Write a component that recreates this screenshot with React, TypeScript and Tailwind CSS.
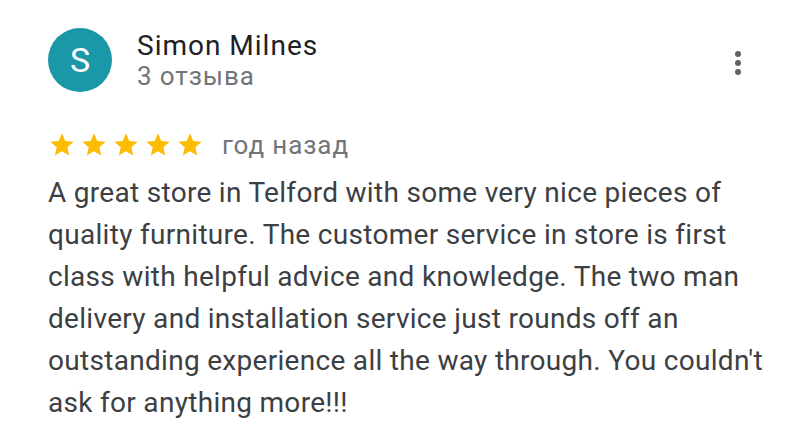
export default function App() {
  const stars = [0, 1, 2, 3, 4];
  return (
    <div
      className="w-[798px] h-[444px] bg-white overflow-hidden"
      style={{ fontFamily: "Roboto, 'Liberation Sans', sans-serif" }}
    >
      <div className="pl-12 pr-[14px] pt-7">
        <div className="flex items-start">
          <div className="w-16 h-16 rounded-full bg-[#1a98a8] flex items-center justify-center text-white text-[34px] leading-none">
            S
          </div>
          <div className="ml-[25px] flex-1 mt-[1px]">
            <div className="text-[28px] leading-[33px] tracking-[1px] text-[#202124]">
              Simon Milnes
            </div>
            <div className="text-[26px] leading-[28px] tracking-[0.9px] text-[#70757a]">
              3 отзыва
            </div>
          </div>
          <button className="mt-[23px] mr-[43px] flex flex-col gap-[3px] items-center">
            <span className="w-[6px] h-[6px] rounded-full bg-[#5f6368]" />
            <span className="w-[6px] h-[6px] rounded-full bg-[#5f6368]" />
            <span className="w-[6px] h-[6px] rounded-full bg-[#5f6368]" />
          </button>
        </div>

        <div className="flex items-center h-[28px] mt-[39px]">
          <div className="flex gap-[4px]">
            {stars.map((i) => (
              <svg key={i} width="28" height="28" viewBox="0 0 24 24">
                <path
                  fill="#fbbc04"
                  d="M12 17.27L18.18 21l-1.64-7.03L22 9.24l-7.19-.61L12 2 9.19 8.63 2 9.24l5.46 4.73L5.82 21z"
                />
              </svg>
            ))}
          </div>
          <span className="ml-[18px] text-[26px] tracking-[0.9px] text-[#70757a]">год назад</span>
        </div>

        <p className="mt-[13px] text-[28px] leading-[42px] tracking-[0.3px] text-[#3c4043] max-w-[736px]">
          A great store in Telford with some very nice pieces of quality furniture. The customer
          service in store is first class with helpful advice and knowledge. The two man delivery
          and installation service just rounds off an outstanding experience all the way through.
          You couldn't ask for anything more!!!
        </p>
      </div>
    </div>
  );
}
